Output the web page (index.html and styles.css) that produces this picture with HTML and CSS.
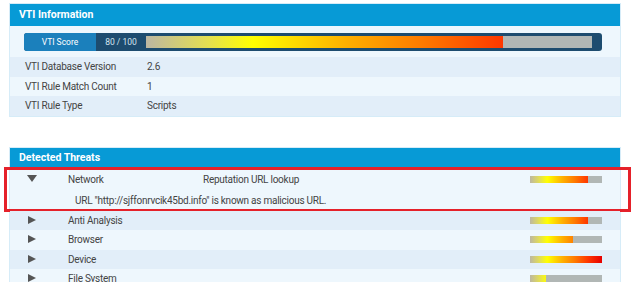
FILE: index.html
```html
<!DOCTYPE html>
<html lang="en">
<head>
    <meta charset="UTF-8">
    <meta name="viewport" content="width=device-width, initial-scale=1.0">
    <title>VTI Report</title>
    <link rel="stylesheet" href="styles.css">
</head>
<body>
    <!-- VTI Information -->
    <div class="panel">
        <div class="panel-head">VTI Information</div>
        <div class="score-row">
            <div class="score">
                <span class="score-label">VTI Score</span>
                <span class="score-value">80 / 100</span>
                <div class="score-track"><div class="rest" style="width: 20%"></div></div>
            </div>
        </div>
        <div class="info-row"><span class="info-key">VTI Database Version</span><span>2.6</span></div>
        <div class="info-row"><span class="info-key">VTI Rule Match Count</span><span>1</span></div>
        <div class="info-row"><span class="info-key">VTI Rule Type</span><span>Scripts</span></div>
    </div>

    <!-- Detected Threats -->
    <div class="panel threats">
        <div class="panel-head small">Detected Threats</div>
        <div class="threat open">
            <div class="threat-row">
                <span class="arrow down"></span>
                <span class="threat-name">Network</span>
                <span class="threat-type">Reputation URL lookup</span>
                <div class="mini-bar"><div class="rest" style="width: 20%"></div></div>
            </div>
            <div class="threat-detail">URL "http://sjffonrvcik45bd.info" is known as malicious URL.</div>
            <div class="highlight"></div>
        </div>
        <div class="threat">
            <div class="threat-row">
                <span class="arrow"></span>
                <span class="threat-name">Anti Analysis</span>
                <span class="threat-type"></span>
                <div class="mini-bar"><div class="rest" style="width: 19%"></div></div>
            </div>
        </div>
        <div class="threat">
            <div class="threat-row">
                <span class="arrow"></span>
                <span class="threat-name">Browser</span>
                <span class="threat-type"></span>
                <div class="mini-bar"><div class="rest" style="width: 40%"></div></div>
            </div>
        </div>
        <div class="threat">
            <div class="threat-row">
                <span class="arrow"></span>
                <span class="threat-name">Device</span>
                <span class="threat-type"></span>
                <div class="mini-bar"><div class="rest" style="width: 0%"></div></div>
            </div>
        </div>
        <div class="threat">
            <div class="threat-row">
                <span class="arrow"></span>
                <span class="threat-name">File System</span>
                <span class="threat-type"></span>
                <div class="mini-bar"><div class="rest" style="width: 78%"></div></div>
            </div>
        </div>
    </div>
</body>
</html>
```

FILE: styles.css
```css
body {
    margin: 0;
    padding: 4px 17px 0 10px;
    background: #fff;
    font-family: Roboto, sans-serif;
    font-size: 10px;
    letter-spacing: -0.25px;
    color: #444;
    overflow: hidden;
}

.panel {
    background: #eef7fd;
    box-shadow: 0 0 0 1px #d6ecf8;
}

.threats {
    margin-top: 32px;
}

.panel-head {
    height: 22px;
    line-height: 22px;
    padding-left: 9px;
    background: #079ad6;
    color: #fff;
    font-weight: bold;
    font-size: 10.5px;
    letter-spacing: 0;
}

.panel-head.small {
    height: 19px;
    line-height: 19px;
}

.score-row {
    padding: 7px 18px 6px 14px;
}

.score {
    display: flex;
    height: 18px;
    background: #1d4c6f;
    border-radius: 3px;
    overflow: hidden;
}

.score-label {
    width: 72px;
    background: #1b80bc;
    color: #fff;
    font-size: 8.5px;
    letter-spacing: 0;
    line-height: 18px;
    text-align: center;
}

.score-value {
    width: 50px;
    color: #d4e4f0;
    font-size: 8.5px;
    letter-spacing: 0;
    line-height: 18px;
    text-align: center;
}

.score-track,
.mini-bar {
    flex: 1;
    display: flex;
    justify-content: flex-end;
    background: linear-gradient(to right, #bdb7a2 0%, #e4e050 14%, #ffff00 24%, #ffb000 45%, #ff7a00 62%, #ff3800 80%, #e60000 100%);
}

.score-track {
    margin: 3px 10px 3px 0;
}

.rest {
    background: #b1b7b5;
}

.info-row {
    display: flex;
    height: 19.5px;
    line-height: 19.5px;
    padding-left: 15px;
}

.info-row:nth-child(odd) {
    background: #e2eef9;
}

.info-key {
    width: 122px;
}

.threat {
    position: relative;
}

.threat:nth-child(odd) {
    background: #e2eef9;
}

.threat-row {
    display: flex;
    align-items: center;
    height: 19.5px;
    padding: 0 18px 0 17px;
}

.threat.open .threat-row {
    height: 25px;
}

.arrow {
    width: 41px;
    height: 9px;
}

.arrow::before {
    content: "";
    display: block;
    margin-left: 1px;
    border-style: solid;
    border-width: 4.5px 0 4.5px 8px;
    border-color: transparent transparent transparent #555;
    width: 0;
    height: 0;
}

.arrow.down::before {
    margin-left: 0;
    border-width: 7px 5px 0 5px;
    border-color: #555 transparent transparent transparent;
}

.threat-name {
    width: 135px;
}

.threat-type {
    flex: 1;
}

.mini-bar {
    flex: none;
    width: 72px;
    height: 7px;
}

.threat-detail {
    height: 19px;
    line-height: 18px;
    padding-left: 65px;
}

.highlight {
    position: absolute;
    top: 0;
    left: -6px;
    right: -11px;
    bottom: -1px;
    border: 3px solid #e5212a;
    pointer-events: none;
}
```
